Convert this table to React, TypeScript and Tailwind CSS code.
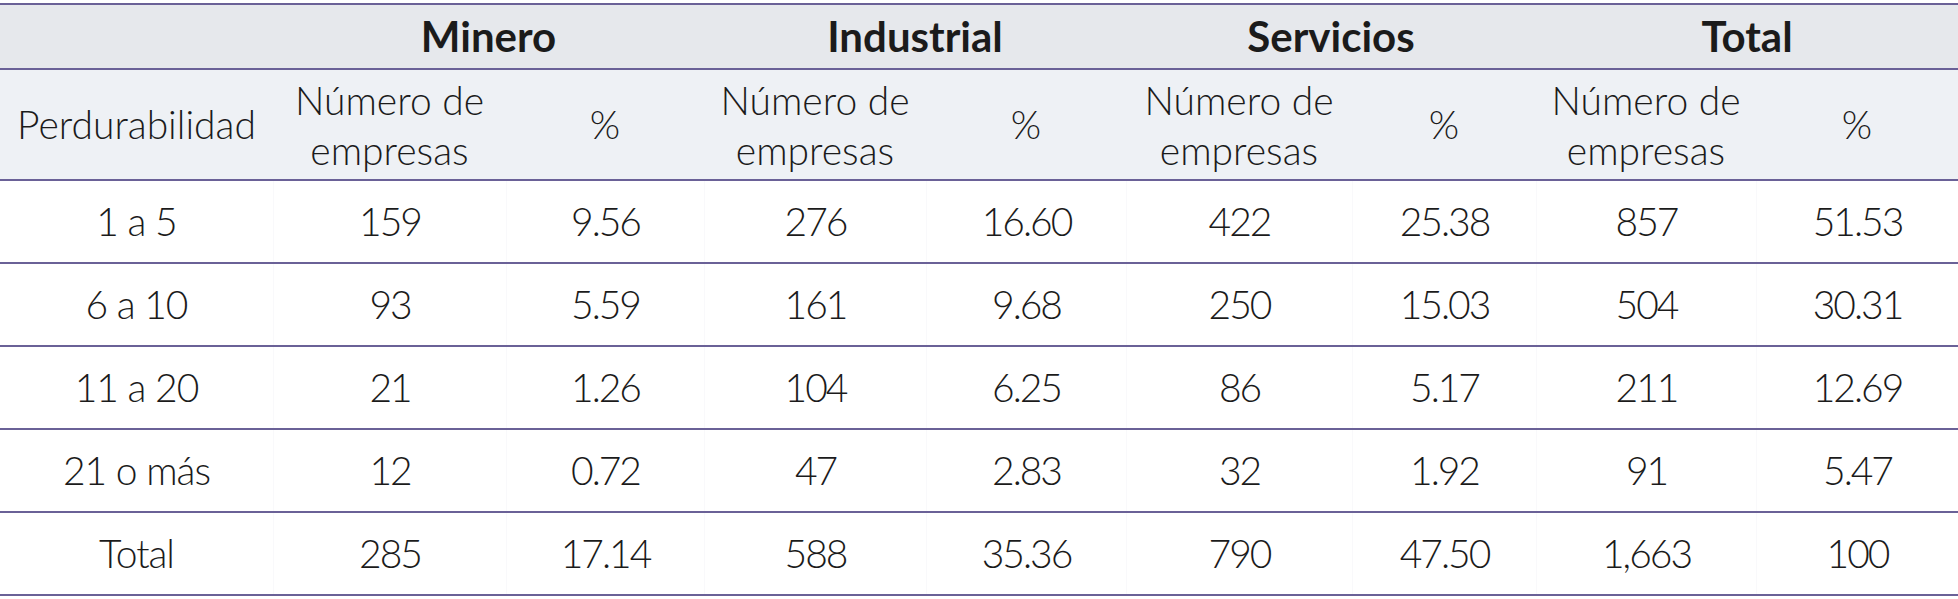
const groups = ['Minero', 'Industrial', 'Servicios', 'Total'];

const rows: string[][] = [
  ['1 a 5', '159', '9.56', '276', '16.60', '422', '25.38', '857', '51.53'],
  ['6 a 10', '93', '5.59', '161', '9.68', '250', '15.03', '504', '30.31'],
  ['11 a 20', '21', '1.26', '104', '6.25', '86', '5.17', '211', '12.69'],
  ['21 o más', '12', '0.72', '47', '2.83', '32', '1.92', '91', '5.47'],
  ['Total', '285', '17.14', '588', '35.36', '790', '47.50', '1,663', '100'],
];

const grid =
  'grid grid-cols-[273px_233px_198px_222px_200px_226px_184px_220px_202px]';

export default function App() {
  return (
    <div className="w-[1958px] h-[599px] bg-white pt-[3px] font-['Lato','Liberation_Sans',sans-serif] text-[#1b1b1b]">
      <div className="border-t-2 border-[#6a6197]">
        {/* sector headings */}
        <div className={`${grid} h-[65px] bg-[#e6e8ec] border-b-2 border-[#6a6197]`}>
          <div />
          {groups.map((g) => (
            <div
              key={g}
              className="col-span-2 flex items-center justify-center text-[42px] font-bold"
            >
              {g}
            </div>
          ))}
        </div>

        {/* column headings */}
        <div className={`${grid} h-[111px] bg-[#eef1f5] border-b-2 border-[#6a6197] text-[39px] font-light`}>
          <div className="flex items-center justify-center">Perdurabilidad</div>
          {groups.map((g) => (
            <div key={g} className="contents">
              <div className="flex items-center justify-center text-center leading-[50px]">
                Número de
                <br />
                empresas
              </div>
              <div className="flex items-center justify-center">%</div>
            </div>
          ))}
        </div>

        {/* data */}
        {rows.map((r) => (
          <div
            key={r[0]}
            className={`${grid} h-[83px] border-b-2 border-[#6a6197] text-[39px] font-light`}
          >
            {r.map((v, i) => (
              <div
                key={i}
                className={
                  i === 0
                    ? 'flex items-center justify-center tracking-[-1px]'
                    : 'flex items-center justify-center tracking-[-2px] border-l border-[#f9f9fb]'
                }
              >
                {v}
              </div>
            ))}
          </div>
        ))}
      </div>
    </div>
  );
}
